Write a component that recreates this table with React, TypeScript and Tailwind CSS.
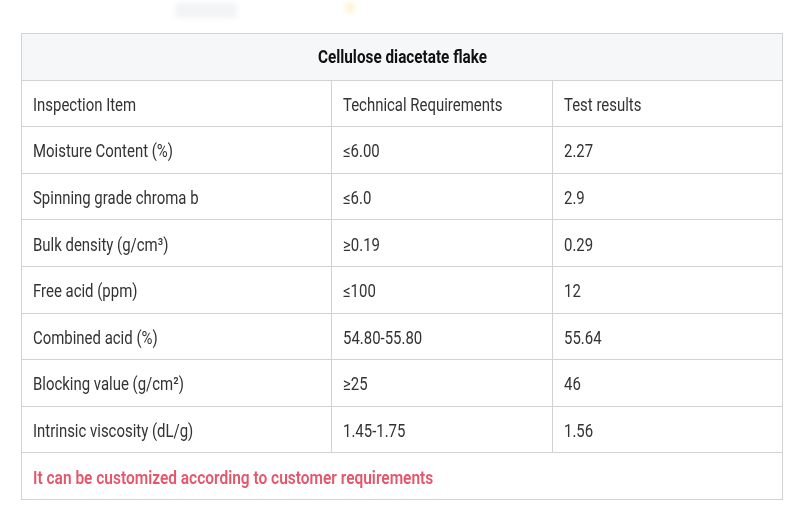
const ROWS: [string, string, string][] = [
  ['Moisture Content (%)', '≤6.00', '2.27'],
  ['Spinning grade chroma b', '≤6.0', '2.9'],
  ['Bulk density (g/cm³)', '≥0.19', '0.29'],
  ['Free acid (ppm)', '≤100', '12'],
  ['Combined acid (%)', '54.80-55.80', '55.64'],
  ['Blocking value (g/cm²)', '≥25', '46'],
  ['Intrinsic viscosity (dL/g)', '1.45-1.75', '1.56'],
];

function Cell({ children }: { children: React.ReactNode }) {
  return (
    <td className="border border-[#d2d2d2] px-[11px] pt-[2px]">
      <span className="inline-block origin-left scale-x-[0.83] whitespace-nowrap">{children}</span>
    </td>
  );
}

export default function App() {
  return (
    <div className="relative h-[520px] w-[800px] overflow-hidden bg-white font-['Roboto',sans-serif]">
      <div className="absolute left-[175px] top-[3px] h-[15px] w-[62px] rounded bg-[#f3f4f6] blur-[2px]" />
      <div className="absolute left-[345px] top-[2px] h-[12px] w-[10px] rounded-full bg-[#fdf6d8] blur-[2px]" />

      <div className="pl-[21px] pt-[33px]">
        <table className="w-[761px] table-fixed border-collapse text-[18px] text-[#333]">
          <colgroup>
            <col className="w-[310px]" />
            <col className="w-[221px]" />
            <col className="w-[230px]" />
          </colgroup>
          <tbody>
            <tr className="h-[46.6px] bg-[#f6f7f8]">
              <td
                colSpan={3}
                className="border border-[#d2d2d2] text-center font-bold text-[#111]"
              >
                <span className="inline-block scale-x-[0.85] whitespace-nowrap">
                  Cellulose diacetate flake
                </span>
              </td>
            </tr>
            <tr className="h-[46.6px]">
              <Cell>Inspection Item</Cell>
              <Cell>Technical Requirements</Cell>
              <Cell>Test results</Cell>
            </tr>
            {ROWS.map(([item, req, result]) => (
              <tr key={item} className="h-[46.6px]">
                <Cell>{item}</Cell>
                <Cell>{req}</Cell>
                <Cell>{result}</Cell>
              </tr>
            ))}
            <tr className="h-[46.6px]">
              <td
                colSpan={3}
                className="border border-[#d2d2d2] px-[11px] pt-[2px] font-semibold text-[#e5566b]"
              >
                <span className="inline-block origin-left scale-x-[0.86] whitespace-nowrap">
                  It can be customized according to customer requirements
                </span>
              </td>
            </tr>
          </tbody>
        </table>
      </div>
    </div>
  );
}
